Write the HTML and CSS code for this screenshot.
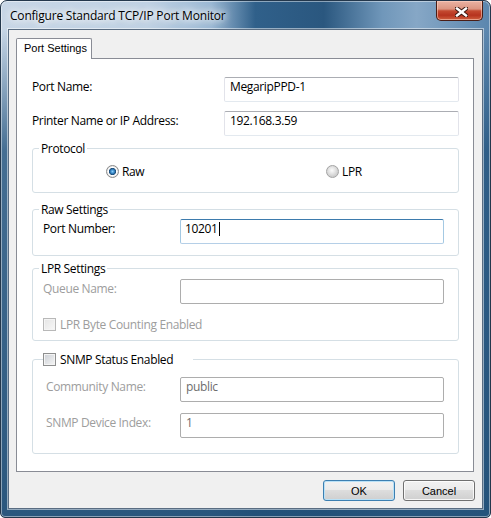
FILE: index.html
```html
<!DOCTYPE html>
<html lang="en">
<head>
    <meta charset="UTF-8">
    <title>Configure Standard TCP/IP Port Monitor</title>
    <link rel="stylesheet" href="styles.css">
</head>
<body>
    <div class="window">
        <div class="titlebar">
            <span class="title">Configure Standard TCP/IP Port Monitor</span>
            <div class="close-btn">
                <svg width="13" height="10" viewBox="0 0 13 10">
                    <path d="M2 1.5 L11 8.5 M11 1.5 L2 8.5" stroke="#3b1710" stroke-width="4.4" stroke-linecap="square"/>
                    <path d="M2 1.5 L11 8.5 M11 1.5 L2 8.5" stroke="#fff" stroke-width="2.4" stroke-linecap="square"/>
                </svg>
            </div>
        </div>

        <div class="client">
            <div class="tab-strip">
                <div class="tab">Port Settings</div>
            </div>

            <div class="tab-page">
                <div class="field-row">
                    <label>Port Name:</label>
                    <div class="textbox">MegaripPPD-1</div>
                </div>
                <div class="field-row">
                    <label>Printer Name or IP Address:</label>
                    <div class="textbox">192.168.3.59</div>
                </div>

                <fieldset class="group protocol">
                    <legend>Protocol</legend>
                    <div class="radio-row">
                        <span class="radio-item"><span class="radio checked"></span>Raw</span>
                        <span class="radio-item"><span class="radio"></span>LPR</span>
                    </div>
                </fieldset>

                <fieldset class="group raw">
                    <legend>Raw Settings</legend>
                    <div class="group-row">
                        <label>Port Number:</label>
                        <div class="textbox focused">10201<span class="caret"></span></div>
                    </div>
                </fieldset>

                <fieldset class="group lpr">
                    <legend>LPR Settings</legend>
                    <div class="group-row">
                        <label class="disabled">Queue Name:</label>
                        <div class="textbox plain"></div>
                    </div>
                    <div class="check-row disabled">
                        <span class="checkbox off"></span>LPR Byte Counting Enabled
                    </div>
                </fieldset>

                <fieldset class="group snmp">
                    <legend class="check-legend"><span class="checkbox"></span>SNMP Status Enabled</legend>
                    <div class="group-row">
                        <label class="disabled">Community Name:</label>
                        <div class="textbox plain dim">public</div>
                    </div>
                    <div class="group-row">
                        <label class="disabled">SNMP Device Index:</label>
                        <div class="textbox plain dim">1</div>
                    </div>
                </fieldset>
            </div>

            <div class="button-row">
                <button class="btn default">OK</button>
                <button class="btn">Cancel</button>
            </div>
        </div>
    </div>
</body>
</html>
```

FILE: styles.css
```css
*{
    box-sizing: border-box;
}
body{
    margin: 0;
    background: #fff;
    font-family: "Segoe UI", "Open Sans", sans-serif;
    font-size: 12px;
    letter-spacing: -0.35px;
    color: #000;
}

/* window frame */
.window{
    width: 491px;
    height: 518px;
    display: flex;
    flex-direction: column;
    border: 1px solid #23374c;
    border-radius: 7px 7px 5px 5px;
    background:
        linear-gradient(180deg, rgba(36,84,126,0) 28px, rgba(36,84,126,.8) 150px, rgba(34,80,120,.95) 100%),
        linear-gradient(90deg, #c7d6e6 0%, #bfd1e3 30%, #9ab8d4 43%, #30608a 52%, #2a577f 66%, #7097ba 78%, #86a7c6 85%, #5b86ae 100%);
    box-shadow: inset 0 0 0 1px rgba(255,255,255,.45);
}
.titlebar{
    height: 28px;
    display: flex;
    justify-content: space-between;
    align-items: flex-start;
    padding: 0 7px 0 9px;
}
.title{
    margin-top: 7px;
    line-height: 16px;
    letter-spacing: -0.2px;
    text-shadow: 0 0 6px #fff, 0 0 10px #fff, 0 0 14px #fff;
}
.close-btn{
    width: 47px;
    height: 20px;
    display: flex;
    align-items: center;
    justify-content: center;
    padding-left: 3px;
    padding-top: 2px;
    border: 1px solid #4a1d15;
    border-top: none;
    border-radius: 0 0 5px 5px;
    background: linear-gradient(180deg, #eab2a3 0%, #dc9581 42%, #c44a31 52%, #b6331e 75%, #d0603f 100%);
    box-shadow: inset 0 0 0 1px rgba(255,215,200,.55);
}

/* client area */
.client{
    flex: 1;
    display: flex;
    flex-direction: column;
    margin: 0 7px 8px;
    padding: 8px 8px 7px 7px;
    background: #f0f0f0;
    border: 1px solid #5a6d82;
    box-shadow: 0 0 0 1px rgba(255,255,255,.5);
}
.tab-strip{
    display: flex;
}
.tab{
    width: 76px;
    height: 21px;
    padding-left: 7px;
    font-family: "Liberation Sans", Arial, sans-serif;
    font-size: 11px;
    letter-spacing: 0;
    line-height: 19px;
    white-space: nowrap;
    background: #fff;
    border: 1px solid #898c95;
    border-bottom: none;
    border-radius: 2px 2px 0 0;
    margin-bottom: -1px;
    position: relative;
    z-index: 1;
}
.tab-page{
    flex: 1;
    background: #fff;
    border: 1px solid #898c95;
    padding: 18px 14px 0 15px;
}

/* text rows: the text sits a little above the box middle */
.field-row,
.group-row{
    display: flex;
    align-items: center;
}
.field-row label,
.group-row label{
    padding-bottom: 6px;
}
.field-row + .field-row{
    margin-top: 9px;
}
.field-row label{
    width: 192px;
}
.textbox{
    width: 235px;
    height: 25px;
    padding: 0 5px 5px;
    line-height: 16px;
    background: #fff;
    border: 1px solid;
    border-color: #abadb3 #e2e3ea #e3e9ef #e2e3ea;
    border-radius: 2px;
    display: flex;
    align-items: center;
}
.textbox.focused{
    padding-left: 4px;
    border-color: #3d7bad #a4c9e3 #b5cfe7 #a4c9e3;
}
.textbox.plain{
    border-color: #adadad;
}
.textbox.dim{
    color: #6d6d6d;
}
.caret{
    width: 1px;
    height: 14px;
    margin-left: 1px;
    background: #000;
}

/* group boxes */
.group{
    margin: 5px 0 0;
    padding: 0 14px 0 10px;
    border: 1px solid #d5dfe5;
    border-radius: 3px;
}
.group legend{
    margin-left: -4px;
    padding: 0 2px;
    line-height: 15px;
}
.group legend.check-legend{
    display: flex;
    align-items: center;
    gap: 4px;
    margin-left: 0;
    padding: 0 20px 0 0;
}
.protocol{
    padding-top: 8px;
    padding-bottom: 14px;
}
.raw{
    margin-top: 9px;
    padding-top: 2px;
    padding-bottom: 11px;
}
.lpr{
    margin-top: 5px;
    padding-top: 3px;
    padding-bottom: 9px;
}
.snmp{
    margin-top: 11px;
    padding-top: 10px;
    padding-bottom: 15px;
}
.group-row + .group-row{
    margin-top: 11px;
}
.group-row label{
    width: 137px;
}
.snmp .group-row label{
    padding-left: 3px;
}
.group-row .textbox{
    width: 264px;
}
.disabled{
    color: #9d9d9d;
}

/* radio buttons */
.radio-row{
    display: flex;
    align-items: center;
    height: 14px;
    padding-left: 63px;
}
.radio-item{
    display: flex;
    align-items: center;
    gap: 3px;
}
.radio-item:first-child{
    width: 220px;
}
.radio{
    width: 13px;
    height: 13px;
    border-radius: 50%;
    border: 1px solid #a3a3a3;
    background: radial-gradient(circle at 45% 40%, #fbfbfb 0, #e6e6e6 3px, #cfcfcf 6px);
}
.radio.checked{
    border-color: #8a8a8a;
    background: radial-gradient(circle at 50% 50%, #8ccdf6 0, #3f92d2 1.6px, #1d4f7d 3.2px, #fff 4px, #f2f2f2 4.8px, #d6d6d6 6px);
}

/* check boxes */
.check-row{
    display: flex;
    align-items: center;
    gap: 4px;
    height: 13px;
    margin-top: 14px;
}
.checkbox{
    width: 13px;
    height: 13px;
    border: 1px solid #8e8f8f;
    background: linear-gradient(135deg, #cbcfd5 0%, #f6f6f6 100%);
    box-shadow: inset 0 0 0 1px #f4f4f4;
}
.checkbox.off{
    border-color: #b8b8b8;
    background: linear-gradient(135deg, #e4e4e4 0%, #f8f8f8 100%);
}

/* dialog buttons */
.button-row{
    display: flex;
    justify-content: flex-end;
    gap: 8px;
    margin-top: 8px;
    margin-right: -1px;
}
.btn{
    width: 72px;
    height: 21px;
    padding: 0;
    font-family: "Liberation Sans", Arial, sans-serif;
    font-size: 11px;
    letter-spacing: 0;
    color: #000;
    border: 1px solid #707070;
    border-radius: 3px;
    background: linear-gradient(180deg, #f2f2f2 0%, #ebebeb 48%, #dddddd 50%, #cfcfcf 100%);
    box-shadow: inset 0 0 0 1px rgba(255,255,255,.8);
}
.btn.default{
    border-color: #3c7fb1;
    box-shadow: inset 0 0 0 1px #b9e1f7;
}
```
